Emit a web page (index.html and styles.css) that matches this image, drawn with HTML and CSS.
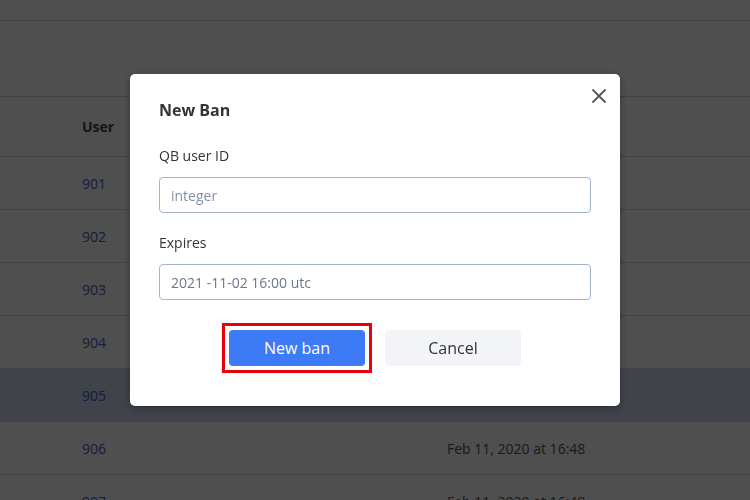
FILE: index.html
```html
<!DOCTYPE html>
<html lang="en">
<head>
<meta charset="utf-8">
<title>New Ban</title>
<link rel="stylesheet" href="styles.css">
</head>
<body>
<div class="page">
  <div class="topbar"></div>
  <div class="toolbar"></div>
  <div class="table">
    <div class="row head"><div class="c-user">User</div><div class="c-date"></div></div>
    <div class="row"><div class="c-user link">901</div><div class="c-date">Feb 11, 2020 at 16:48</div></div>
    <div class="row"><div class="c-user link">902</div><div class="c-date">Feb 11, 2020 at 16:48</div></div>
    <div class="row"><div class="c-user link">903</div><div class="c-date">Feb 11, 2020 at 16:48</div></div>
    <div class="row"><div class="c-user link">904</div><div class="c-date">Feb 11, 2020 at 16:48</div></div>
    <div class="row active"><div class="c-user link">905</div><div class="c-date">Feb 11, 2020 at 16:48</div></div>
    <div class="row"><div class="c-user link">906</div><div class="c-date">Feb 11, 2020 at 16:48</div></div>
    <div class="row"><div class="c-user link">907</div><div class="c-date">Feb 11, 2020 at 16:48</div></div>
  </div>
</div>

<div class="overlay">
  <div class="modal">
    <button class="close" aria-label="Close">
      <svg width="14" height="14" viewBox="0 0 14 14"><path d="M1 1L13 13M13 1L1 13" stroke="#555" stroke-width="1.8" stroke-linecap="round" fill="none"/></svg>
    </button>
    <h2 class="title">New Ban</h2>
    <div class="field">
      <label class="label">QB user ID</label>
      <div class="input placeholder">integer</div>
    </div>
    <div class="field">
      <label class="label">Expires</label>
      <div class="input value">2021 -11-02 16:00 utc</div>
    </div>
    <div class="actions">
      <button class="btn primary">New ban</button>
      <button class="btn secondary">Cancel</button>
    </div>
  </div>
</div>
</body>
</html>
```

FILE: styles.css
```css
html, body {
  margin: 0;
  padding: 0;
  width: 750px;
  height: 500px;
  overflow: hidden;
  font-family: "Open Sans", "Noto Sans", sans-serif;
  background: #ffffff;
}

.page {
  width: 750px;
  height: 500px;
  overflow: hidden;
}

.topbar {
  height: 20px;
  border-bottom: 1px solid #d2d7e6;
}

.toolbar {
  height: 75px;
  border-bottom: 1px solid #d2d7e6;
}

.row {
  display: flex;
  align-items: center;
  height: 52px;
  border-bottom: 1px solid #d2d7e6;
  padding-left: 82px;
  font-size: 14px;
  color: #555;
}

.row.head {
  height: 59px;
  font-weight: 700;
  color: #444;
}

.row.active {
  background: #d0d9f3;
}

.c-user {
  width: 365px;
}

.link {
  color: #3b63c4;
}

.c-date {
  color: #555;
}

.overlay {
  position: fixed;
  inset: 0;
  background: rgba(0, 0, 0, 0.69);
  display: flex;
  justify-content: center;
  align-items: flex-start;
}

.modal {
  position: relative;
  margin-top: 74px;
  width: 490px;
  box-sizing: border-box;
  padding: 25px 29px 40px 29px;
  background: #fff;
  border-radius: 5px;
  box-shadow: 0 2px 8px rgba(0, 0, 0, 0.35);
}

.close {
  position: absolute;
  top: 10px;
  right: 9px;
  width: 24px;
  height: 24px;
  padding: 0;
  border: 0;
  background: none;
  display: flex;
  align-items: center;
  justify-content: center;
}

.title {
  margin: 0;
  font-size: 16px;
  line-height: 22px;
  font-weight: 700;
  color: #333;
}

.field {
  margin-top: 25px;
  display: flex;
  flex-direction: column;
}

.field + .field {
  margin-top: 20px;
}

.label {
  font-size: 14px;
  line-height: 20px;
  color: #333;
  margin-bottom: 11px;
}

.input {
  height: 36px;
  box-sizing: border-box;
  border: 1px solid #a5b3cc;
  border-radius: 4px;
  padding: 0 11px;
  display: flex;
  align-items: center;
  font-size: 14px;
}

.placeholder {
  color: #8392ab;
}

.value {
  color: #6b778c;
}

.actions {
  margin-top: 30px;
  display: flex;
  justify-content: center;
  gap: 20px;
}

.btn {
  width: 136px;
  height: 36px;
  border: 0;
  border-radius: 4px;
  font-family: "Open Sans", "Noto Sans", sans-serif;
  font-size: 16px;
  cursor: pointer;
}

.primary {
  position: relative;
  background: #3d7af5;
  color: #fff;
}

.primary::after {
  content: "";
  position: absolute;
  inset: -7px;
  border: 3px solid #e8000b;
  pointer-events: none;
}

.secondary {
  background: #f3f4f8;
  color: #333;
}
```
